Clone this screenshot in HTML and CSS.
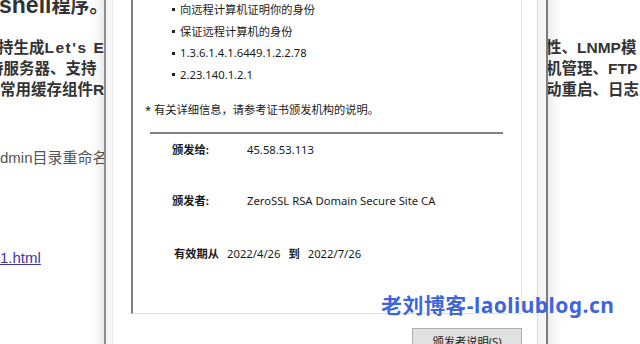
FILE: index.html
```html
<!DOCTYPE html>
<html lang="zh-CN">
<head>
<meta charset="utf-8">
<title>证书</title>
<link rel="stylesheet" href="styles.css">
</head>
<body>
<div class="page">
  <div class="col col-left">
    <p class="title"><span class="wide">shell</span>程序。</p>
    <p class="line line1">持生成<span class="lat">Let's </span>Encrypt</p>
    <p class="line line2">持服务器、支持</p>
    <p class="line">常用缓存组件Redis</p>
    <p class="plain">dmin目录重命名</p>
    <p class="plain link-row"><a class="link" href="#">1.html</a></p>
  </div>
  <div class="col col-right">
    <p class="title">&nbsp;</p>
    <p class="line">性、LNMP模</p>
    <p class="line">机管理、FTP</p>
    <p class="line">动重启、日志</p>
  </div>
</div>

<div class="dialog">
  <div class="tabpage">
    <div class="panel">
      <ul class="purposes">
        <li>向远程计算机证明你的身份</li>
        <li>保证远程计算机的身份</li>
        <li>1.3.6.1.4.1.6449.1.2.2.78</li>
        <li>2.23.140.1.2.1</li>
      </ul>
      <p class="note">* 有关详细信息，请参考证书颁发机构的说明。</p>
      <div class="sep"></div>
      <div class="row row-to"><span class="label">颁发给:</span><span class="value">45.58.53.113</span></div>
      <div class="row row-by"><span class="label">颁发者:</span><span class="value">ZeroSSL RSA Domain Secure Site CA</span></div>
      <div class="row row-valid"><span class="label-b">有效期从</span><span class="value">2022/4/26</span><span class="label-b">到</span><span class="value">2022/7/26</span></div>
    </div>
    <button class="btn" type="button">颁发者说明(S)</button>
  </div>
</div>

<div class="watermark">老刘博客-laoliublog.cn</div>
</body>
</html>
```

FILE: styles.css
```css
* { box-sizing: border-box; }
html, body {
  margin: 0;
  padding: 0;
  width: 640px;
  height: 344px;
  overflow: hidden;
  background: #ffffff;
}
body {
  position: relative;
  font-family: "Liberation Sans", "Noto Sans CJK SC", sans-serif;
  color: #333333;
}
p { margin: 0; }

.page {
  display: flex;
  margin-top: -8px;
}
.col {
  display: flex;
  flex-direction: column;
  white-space: nowrap;
  overflow: hidden;
}
.col-left { width: 105px; }
.col-right { margin-left: 441px; width: 94px; }

.title {
  font-size: 19px;
  font-weight: 700;
  line-height: 26px;
  height: 26px;
  text-indent: -1px;
}
.wide { font-size: 23px; }
.line {
  font-size: 15.5px;
  font-weight: 700;
  line-height: 21px;
  height: 21px;
}
.title + .line { margin-top: 18.5px; }
.line1 { text-indent: -2px; }
.line2 { text-indent: -12px; }
.lat { letter-spacing: 1.5px; }

.plain {
  font-size: 15px;
  line-height: 20px;
  color: #555555;
  margin-top: 48.5px;
}
.link-row { margin-top: 80px; }
.link { color: #44359c; text-decoration: underline; }

/* dialog window */
.dialog {
  position: absolute;
  left: 104px;
  top: -60px;
  width: 444px;
  height: 440px;
  background: #f6f6f6;
  border-left: 2px solid #8e8e8e;
  border-right: 2px solid #7c7c7c;
  box-shadow: 0 0 14px rgba(0, 0, 0, 0.16);
  font-family: "Noto Sans", "Noto Sans CJK SC", sans-serif;
  font-size: 11.25px;
  color: #1a1a1a;
}
.tabpage {
  margin-left: 6px;
  margin-right: 8px;
  height: 100%;
  background: #ffffff;
  border-left: 1px solid #e6e6e6;
  border-right: 1px solid #dcdcdc;
  padding: 20px 15px 0 18px;
  display: flex;
  flex-direction: column;
}
.panel {
  height: 354px;
  border-left: 2px solid #7f7f7f;
  border-right: 1px solid #e2e2e2;
  border-bottom: 1px solid #e2e2e2;
  padding-top: 39px;
  background: #ffffff;
}
.purposes {
  list-style: none;
  margin: 0;
  padding: 0 0 0 39px;
}
.purposes li {
  display: flex;
  align-items: center;
  line-height: 21.7px;
  height: 21.7px;
}
.purposes li::before {
  content: "";
  width: 3px;
  height: 3px;
  background: #222222;
  margin-right: 5px;
  flex: none;
}
.note {
  margin-top: 16px;
  padding-left: 12px;
  line-height: 16px;
}
.sep {
  margin: 14px 18px 0 17px;
  height: 2px;
  background: #808080;
}
.row {
  display: flex;
  align-items: center;
  line-height: 16px;
  height: 16px;
  padding-left: 39px;
}
.row-to { margin-top: 8px; }
.row-by { margin-top: 35.7px; }
.row-valid { margin-top: 36.3px; padding-left: 41px; gap: 8px; }
.label {
  font-weight: 700;
  width: 75px;
  flex: none;
}
.label-b { font-weight: 700; }

.btn {
  align-self: flex-end;
  margin-top: 14px;
  width: 110px;
  height: 26px;
  background: #e1e1e1;
  border: 1px solid #adadad;
  border-radius: 0;
  font-family: "Noto Sans", "Noto Sans CJK SC", sans-serif;
  font-size: 11.25px;
  color: #1a1a1a;
  padding: 0;
}

.watermark {
  position: absolute;
  left: 381px;
  top: 294px;
  font-family: "Noto Sans", "Noto Sans CJK SC", sans-serif;
  font-size: 21px;
  font-weight: 700;
  line-height: 22px;
  letter-spacing: 0.45px;
  color: #3d66dc;
  white-space: nowrap;
}
```
